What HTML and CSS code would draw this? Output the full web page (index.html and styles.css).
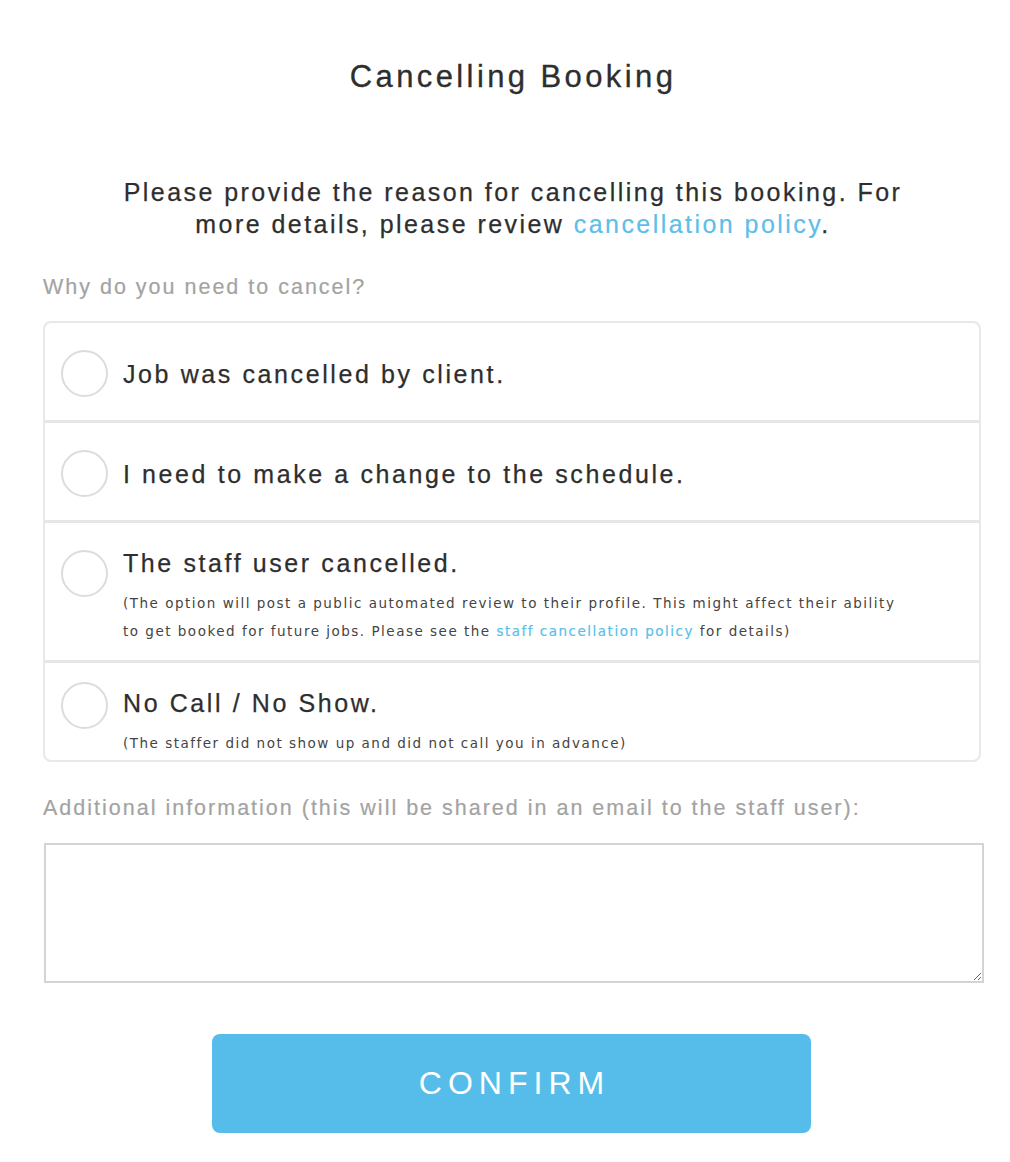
FILE: index.html
```html
<!DOCTYPE html>
<html>
<head>
<meta charset="utf-8">
<link rel="stylesheet" href="styles.css">
</head>
<body>
<div class="page">
  <h1 class="title">Cancelling Booking</h1>
  <p class="intro">Please provide the reason for cancelling this booking. For<br>more details, please review <a class="link" href="#">cancellation policy</a>.</p>
  <div class="field-label">Why do you need to cancel?</div>
  <div class="options">
    <div class="option option-simple">
      <span class="radio"></span>
      <div class="option-text"><div class="option-label">Job was cancelled by client.</div></div>
    </div>
    <div class="option option-simple">
      <span class="radio"></span>
      <div class="option-text"><div class="option-label">I need to make a change to the schedule.</div></div>
    </div>
    <div class="option option-detail">
      <span class="radio"></span>
      <div class="option-text">
        <div class="option-label">The staff user cancelled.</div>
        <div class="option-note">(The option will post a public automated review to their profile. This might affect their ability<br>to get booked for future jobs. Please see the <a class="link" href="#">staff cancellation policy</a> for details)</div>
      </div>
    </div>
    <div class="option option-detail option-last">
      <span class="radio"></span>
      <div class="option-text">
        <div class="option-label">No Call / No Show.</div>
        <div class="option-note">(The staffer did not show up and did not call you in advance)</div>
      </div>
    </div>
  </div>
  <div class="field-label field-label-info">Additional information (this will be shared in an email to the staff user):</div>
  <textarea class="info"></textarea>
  <div class="actions"><button class="confirm">CONFIRM</button></div>
</div>
</body>
</html>
```
FILE: styles.css
```css
html, body {
  margin: 0;
  padding: 0;
  background: #ffffff;
}
body {
  font-family: "Liberation Sans", Arial, sans-serif;
  color: #333333;
}
.page {
  width: 940px;
  padding: 0 0 0 43px;
}
.title {
  margin: 0;
  padding-top: 58px;
  font-size: 31px;
  font-weight: normal;
  line-height: 38px;
  text-align: center;
  letter-spacing: 3.4px;
  color: #2e2e2e;
  -webkit-text-stroke: 0.3px #2e2e2e;
}
.intro {
  margin: 80px 0 0;
  font-size: 25px;
  line-height: 32px;
  text-align: center;
  letter-spacing: 2.45px;
  color: #2e2e2e;
  -webkit-text-stroke: 0.25px #2e2e2e;
}
.link {
  color: #5bbfea;
  text-decoration: none;
  -webkit-text-stroke: 0.2px #5bbfea;
}
.field-label {
  margin-top: 33px;
  font-size: 21.5px;
  line-height: 28px;
  color: #a3a3a3;
  letter-spacing: 2px;
  -webkit-text-stroke: 0.2px #a3a3a3;
}
.options {
  margin-top: 20px;
  width: 934px;
  border: 2px solid #e8e8e8;
  border-radius: 8px;
}
.option {
  display: flex;
  padding: 0 16px;
  border-bottom: 3px solid #e6e6e6;
}
.option-last {
  border-bottom: none;
}
.option-simple {
  height: 93px;
  padding-top: 4px;
  align-items: center;
}
.radio {
  flex: none;
  width: 43px;
  height: 43px;
  border: 2px solid #dcdcdc;
  border-radius: 50%;
  box-sizing: content-box;
  margin-right: 15px;
}
.option-label {
  font-size: 25px;
  line-height: 46px;
  letter-spacing: 2.6px;
  color: #2e2e2e;
  -webkit-text-stroke: 0.25px #2e2e2e;
}
.option-detail {
  align-items: flex-start;
  padding-top: 17px;
  padding-bottom: 15px;
}
.option-detail .radio {
  margin-top: 10px;
}
.option-last {
  padding-top: 17px;
  padding-bottom: 3px;
}
.option-last .radio {
  margin-top: 2px;
}
.option-note {
  margin-top: 3px;
  font-family: "DejaVu Sans", sans-serif;
  font-size: 13.5px;
  line-height: 28px;
  letter-spacing: 1.5px;
  color: #444;
}
.field-label-info {
  margin-top: 32px;
}
.info {
  display: block;
  margin: 21px 0 0 1px;
  width: 940px;
  height: 140px;
  box-sizing: border-box;
  border: 2px solid #d4d4d4;
  border-radius: 0;
  padding: 6px;
  resize: vertical;
  font-family: "Liberation Sans", sans-serif;
}
.actions {
  display: flex;
  justify-content: center;
  margin-top: 51px;
  padding-right: 3px;
}
.confirm {
  width: 599px;
  height: 99px;
  border: none;
  border-radius: 8px;
  background: #56bdea;
  color: #ffffff;
  font-family: "Liberation Sans", Arial, sans-serif;
  font-size: 32px;
  letter-spacing: 6px;
  padding: 0 0 0 6px;
}
```
